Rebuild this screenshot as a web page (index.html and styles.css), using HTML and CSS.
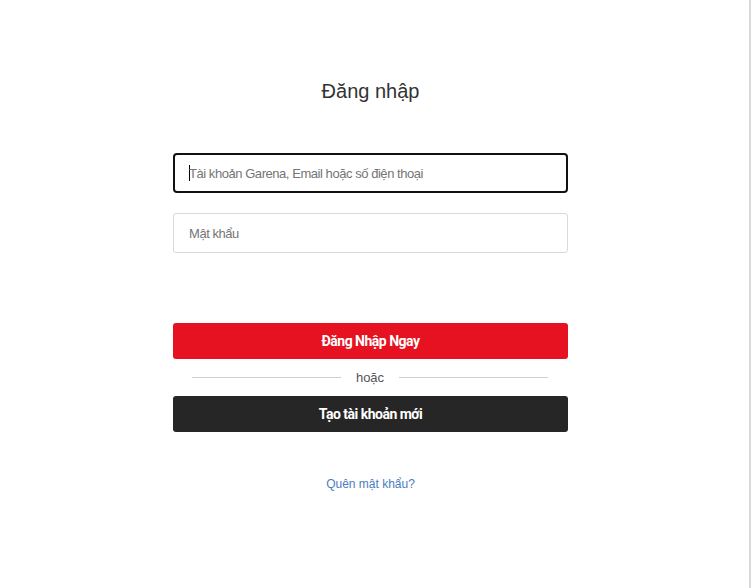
FILE: index.html
```html
<!DOCTYPE html>
<html lang="vi">
<head>
<meta charset="utf-8">
<link rel="stylesheet" href="styles.css">
</head>
<body>
<div class="frame">
  <div class="login">
    <h1 class="title">Đăng nhập</h1>
    <div class="field field-active"><span class="caret"></span><span class="ph">Tài khoản Garena, Email hoặc số điện thoại</span></div>
    <div class="field"><span class="ph">Mật khẩu</span></div>
    <button class="btn btn-red">Đăng Nhập Ngay</button>
    <div class="or"><span class="line"></span><span class="or-text">hoặc</span><span class="line"></span></div>
    <button class="btn btn-dark">Tạo tài khoản mới</button>
    <a class="forgot" href="#">Quên mật khẩu?</a>
  </div>
</div>
</body>
</html>
```
FILE: styles.css
```css
html, body { margin: 0; padding: 0; }
body {
  background: #fff;
  font-family: "Liberation Sans", Arial, sans-serif;
  width: 751px;
  height: 588px;
  overflow: hidden;
}
.frame {
  box-sizing: border-box;
  width: 751px;
  height: 588px;
  border-right: 2px solid #d8d8d4;
  padding-right: 8px;
  padding-top: 78px;
  display: flex;
  justify-content: center;
}
.login {
  width: 395px;
  display: flex;
  flex-direction: column;
}
.title {
  margin: 0 0 49px;
  text-align: center;
  font-size: 20px;
  font-weight: 400;
  color: #333;
  line-height: 26px;
}
.field {
  box-sizing: border-box;
  height: 40px;
  border: 1px solid #d9d9d9;
  border-radius: 3px;
  display: flex;
  align-items: center;
  padding-left: 15px;
  margin-bottom: 20px;
}
.field-active {
  border: 2px solid #111;
  border-radius: 4px;
  padding-left: 14px;
}
.caret {
  width: 1px;
  height: 16px;
  background: #000;
  margin-right: -1px;
}
.ph {
  font-size: 13px;
  letter-spacing: -0.45px;
  color: #757575;
}
.btn {
  box-sizing: border-box;
  height: 36px;
  border: none;
  border-radius: 3px;
  color: #fff;
  font-family: Roboto, "Liberation Sans", Arial, sans-serif;
  font-size: 14px;
  font-weight: 700;
  letter-spacing: -0.5px;
  cursor: pointer;
}
.btn-red { background: #e61121; margin-top: 50px; }
.btn-dark { background: #262626; }
.or {
  height: 37px;
  display: flex;
  align-items: center;
  padding: 0 20px 0 19px;
  gap: 15px;
}
.line { flex: 1; height: 1px; background: #cfcfcf; }
.or-text { font-size: 13px; color: #555; }
.forgot {
  margin-top: 45px;
  align-self: center;
  font-size: 12px;
  color: #4a7dc0;
  text-decoration: none;
}
```
